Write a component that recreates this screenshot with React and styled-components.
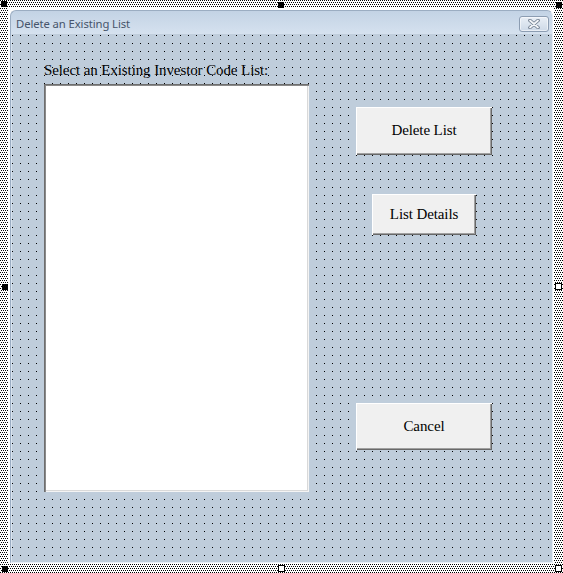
import React from 'react';
import styled, { createGlobalStyle } from 'styled-components';

const Global = createGlobalStyle`
  html, body { margin: 0; padding: 0; background: #fff; }
  body { width: 563px; height: 573px; overflow: hidden; }
`;

const dot = 'conic-gradient(from 270deg at 1px 1px, #000 90deg, transparent 0)';

const Designer = styled.div`
  position: relative;
  width: 563px;
  height: 573px;
  box-sizing: border-box;
  padding: 8px 9px 9px 8px;
  background-color: #fff;
  background-image: ${dot}, ${dot};
  background-size: 2px 4px, 2px 4px;
  background-position: 0 0, 1px 2px;
`;

const Ring = styled.div`
  height: 100%;
  box-sizing: border-box;
  padding: 2px 1px 1px 2px;
  background: #fff;
  display: flex;
`;

const Window = styled.div`
  flex: 1;
  display: flex;
  flex-direction: column;
  box-sizing: border-box;
  border: 1px solid #9badc2;
  border-right-color: #e6edf5;
  border-bottom-color: #e6edf5;
  border-radius: 6px 6px 0 0;
  background: linear-gradient(#c3d3e5 0px, #d6e2ef 24px, #dbe5f0 100%);
`;

const TitleBar = styled.div`
  height: 23px;
  display: flex;
  align-items: center;
  justify-content: space-between;
  padding: 0 3px 0 5px;
  flex: none;
`;

const Title = styled.span`
  font-family: "Noto Sans", "Open Sans", sans-serif;
  font-size: 11.3px;
  color: #46546a;
  letter-spacing: -0.1px;
  padding-top: 2px;
`;

const CloseBox = styled.div`
  width: 28px;
  height: 14px;
  margin-top: 2px;
  border: 1px solid #8c9db2;
  border-radius: 3px;
  background: linear-gradient(#e9eff6, #cdd9e7);
  display: flex;
  align-items: center;
  justify-content: center;
  box-shadow: inset 0 0 0 1px rgba(255,255,255,0.55);
`;

const Client = styled.div`
  flex: 1;
  margin: 0 0 0 1px;
  display: flex;
  background-color: #bfcddb;
  background-image: ${dot};
  background-size: 8px 8px;
  background-position: 0 1px;
  padding-left: 32px;
`;

const LeftColumn = styled.div`
  display: flex;
  flex-direction: column;
  padding-top: 28px;
`;

const Caption = styled.div`
  font-family: "Liberation Serif", "Times New Roman", serif;
  font-size: 15px;
  letter-spacing: -0.1px;
  line-height: 17px;
  color: #000;
  white-space: nowrap;
`;

const ListBox = styled.div`
  margin-top: 5px;
  width: 265px;
  height: 408px;
  box-sizing: border-box;
  background: #fff;
  box-shadow:
    inset 1px 1px 0 #6e6e6e,
    inset 2px 2px 0 #8a8a8a,
    inset -1px -1px 0 #f4f4f4,
    inset -2px -2px 0 #d9d9d9;
`;

const RightColumn = styled.div`
  width: 136px;
  margin-left: 47px;
  padding-top: 73px;
  display: flex;
  flex-direction: column;
  align-items: center;
`;

const Button = styled.div`
  width: ${p => p.$w}px;
  height: ${p => p.$h}px;
  margin-top: ${p => p.$top || 0}px;
  box-sizing: border-box;
  background: #f0f0f0;
  display: flex;
  align-items: center;
  justify-content: center;
  font-family: "Liberation Serif", "Times New Roman", serif;
  font-size: 15px;
  letter-spacing: -0.1px;
  color: #000;
  box-shadow:
    inset 1px 1px 0 #ffffff,
    inset -1px -1px 0 #696969,
    inset -2px -2px 0 #a0a0a0;
  padding-bottom: 1px;
`;

const Handle = styled.div`
  position: absolute;
  left: ${p => p.$x}px;
  top: ${p => p.$y}px;
  width: ${p => (p.$open ? 7 : 6)}px;
  height: ${p => (p.$open ? 7 : 6)}px;
  box-sizing: border-box;
  background: ${p => (p.$open ? '#fff' : '#000')};
  border: 1px solid #000;
`;

const CloseGlyph = () => (
  <svg width="14" height="10" viewBox="0 0 14 10">
    <path d="M3 1.5 L11 8.5 M11 1.5 L3 8.5" stroke="#6f7d8e" strokeWidth="3.6" strokeLinecap="round" fill="none" />
    <path d="M3 1.5 L11 8.5 M11 1.5 L3 8.5" stroke="#f3f5f8" strokeWidth="1.8" strokeLinecap="round" fill="none" />
  </svg>
);

export default function App() {
  return (
    <>
      <Global />
      <Designer>
        <Ring>
          <Window>
            <TitleBar>
              <Title>Delete an Existing List</Title>
              <CloseBox><CloseGlyph /></CloseBox>
            </TitleBar>
            <Client>
              <LeftColumn>
                <Caption>Select an Existing Investor Code List:</Caption>
                <ListBox />
              </LeftColumn>
              <RightColumn>
                <Button $w={136} $h={48}>Delete List</Button>
                <Button $w={104} $h={41} $top={39}>List Details</Button>
                <Button $w={136} $h={47} $top={168}>Cancel</Button>
              </RightColumn>
            </Client>
          </Window>
        </Ring>
        <Handle $x={1} $y={1} />
        <Handle $x={278} $y={2} />
        <Handle $x={556} $y={2} />
        <Handle $x={2} $y={284} />
        <Handle $x={2} $y={566} />
        <Handle $x={555} $y={283} $open />
        <Handle $x={278} $y={565} $open />
        <Handle $x={555} $y={565} $open />
      </Designer>
    </>
  );
}
